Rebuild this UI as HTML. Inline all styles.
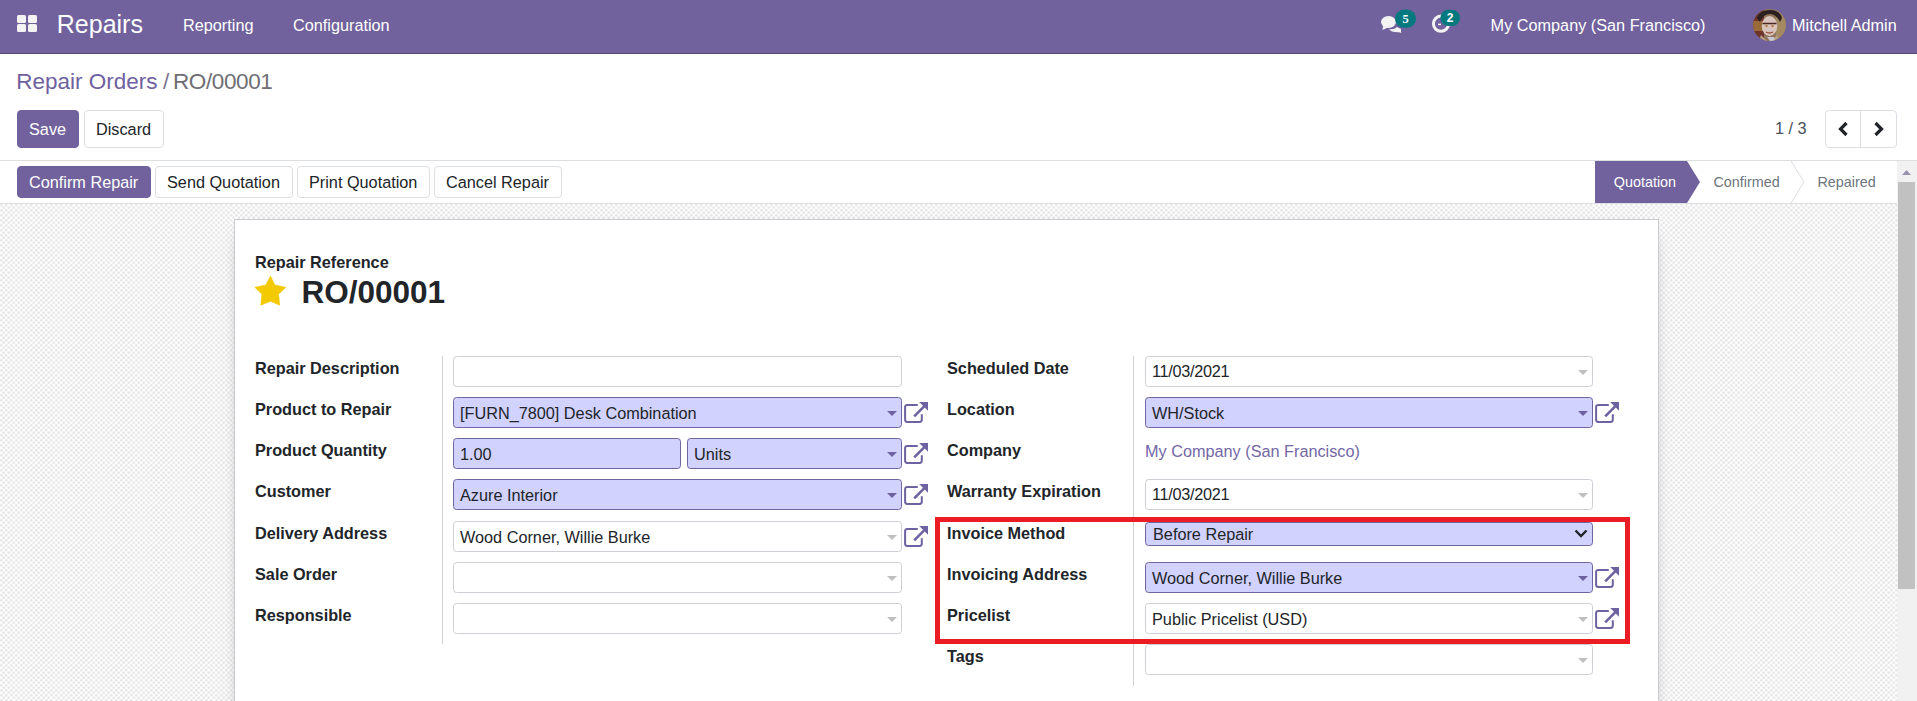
<!DOCTYPE html>
<html><head><meta charset="utf-8">
<style>
html,body{margin:0;padding:0;width:1917px;height:701px;overflow:hidden;background:#fff;font-family:"Liberation Sans",sans-serif;color:#212529}
.a{position:absolute}
.t{position:absolute;line-height:1;white-space:nowrap;font-size:16.25px}
.b{font-weight:bold}
#nav{left:0;top:0;width:1917px;height:53px;background:#71629d;border-bottom:1px solid #564a7d}
.w{color:#fff}
.btn{position:absolute;box-sizing:border-box;border-radius:4px}
.bp{background:#71629d;border:1px solid #71629d}
.bs{background:#fff;border:1px solid #dcdfe3}
#cp{left:0;top:54px;width:1917px;height:106px;background:#fff}
#sb{left:0;top:160px;width:1917px;height:42px;background:#fff;border-top:1px solid #dcdee2;border-bottom:1px solid #dcdee2}
#bg{left:0;top:204px;width:1897px;height:497px;background-color:#fcfcfc;background-image:radial-gradient(circle at 1.25px 1.25px,rgba(0,0,0,.085) 0.6px,rgba(0,0,0,0) 1.9px),radial-gradient(circle at 3.75px 3.75px,rgba(0,0,0,.085) 0.6px,rgba(0,0,0,0) 1.9px);background-size:5px 5px}
#sheet{left:234px;top:219px;width:1425px;height:520px;background:#fff;border:1px solid #c8cbd0;box-sizing:border-box;box-shadow:0 5px 20px -15px #000}
.inp{position:absolute;box-sizing:border-box;height:31px;border:1px solid #cccfd4;border-radius:3.5px;background:#fff}
.req{background:#d2d2ff;border-color:#7165a0}
.car{position:absolute;width:0;height:0;border-left:5px solid transparent;border-right:5px solid transparent;border-top:5px solid #bfbfbf}
.req .car{border-top-color:#6e62a0}
.sep{position:absolute;width:1px;background:#d0d1d8}
.lnk{position:absolute;width:25px;height:22px}
</style></head><body>

<!-- NAVBAR -->
<div id="nav" class="a">
  <div class="a" style="left:17px;top:15px;width:9px;height:8px;background:#f3f3f3;border-radius:1.5px"></div>
  <div class="a" style="left:28px;top:15px;width:9px;height:8px;background:#f3f3f3;border-radius:1.5px"></div>
  <div class="a" style="left:17px;top:24px;width:9px;height:8px;background:#f3f3f3;border-radius:1.5px"></div>
  <div class="a" style="left:28px;top:24px;width:9px;height:8px;background:#f3f3f3;border-radius:1.5px"></div>
  <div class="t w" style="left:56.8px;top:11.7px;font-size:25px">Repairs</div>
  <div class="t w" style="left:183px;top:17px">Reporting</div>
  <div class="t w" style="left:293px;top:17px">Configuration</div>

<svg class="a" style="left:1380px;top:8px" width="40" height="28" viewBox="0 0 40 28">
<ellipse cx="8.5" cy="14" rx="7.5" ry="6" fill="#f3f3f3"/>
<path d="M3 18L2.5 22L8 19.5Z" fill="#f3f3f3"/>
<path d="M9 21Q14 22 17 19L21 21L21 24.5L15 24Q11 24 9 21Z" fill="#f3f3f3"/>
<path d="M18 23L21.5 25L20 21Z" fill="#f3f3f3"/>
<rect x="15" y="1.6" width="21" height="18.2" rx="9" fill="#01797f"/>
<text x="25.5" y="15.2" font-family="Liberation Serif" font-weight="bold" font-size="12.5" fill="#fff" text-anchor="middle">5</text>
</svg>
<svg class="a" style="left:1428px;top:8px" width="36" height="28" viewBox="0 0 36 28">
<circle cx="13" cy="15.7" r="7.6" fill="none" stroke="#f3f3f3" stroke-width="3"/>
<path d="M10 16.4H13" stroke="#f3f3f3" stroke-width="1.5"/>
<rect x="12.4" y="1.8" width="19.6" height="16.2" rx="8.1" fill="#01797f"/>
<text x="22.2" y="14.2" font-family="Liberation Sans" font-weight="bold" font-size="12" fill="#fff" text-anchor="middle">2</text>
</svg>
<svg class="a" style="left:1753px;top:9px" width="33" height="32" viewBox="0 0 33 32">
<defs><clipPath id="cc"><ellipse cx="16.5" cy="16" rx="16.4" ry="16"/></clipPath></defs>
<g clip-path="url(#cc)">
<rect width="33" height="32" fill="#8f7458"/>
<rect x="0" y="0" width="11" height="32" fill="#6e3428"/>
<path d="M0 12H10V22H0Z" fill="#9a6a3a"/>
<rect x="23" y="0" width="10" height="32" fill="#a48a60"/>
<path d="M4 9Q7 1 17 1Q27 1 29 9L27 13Q23 5 17 5Q10 5 7 13Z" fill="#2b2020"/>
<ellipse cx="16.5" cy="17" rx="7.8" ry="10" fill="#d8c4bc"/>
<path d="M9.5 14.5H23.5" stroke="#4a2626" stroke-width="1.6"/>
<circle cx="13.5" cy="17" r="1.2" fill="#b07a40"/><circle cx="19.5" cy="17" r="1.2" fill="#b07a40"/>
<path d="M13 23Q16.5 25 20 23" stroke="#9a4a3a" stroke-width="1.4" fill="none"/>
<path d="M8 26L14 32H18L24 26L26 32H6Z" fill="#b8a088"/>
<path d="M14 28L17 32H22L21 28Z" fill="#c8c8d4"/>
</g></svg>
  <div class="t w" style="left:1490.6px;top:17.3px">My Company (San Francisco)</div>
  <div class="t w" style="left:1792px;top:17.3px">Mitchell Admin</div>
</div>

<!-- CONTROL PANEL -->
<div class="t" style="left:16.2px;top:71.2px;font-size:22.5px;color:#6f61a0">Repair Orders</div><div class="t" style="left:163px;top:71.2px;font-size:22.5px;color:#7a7490">/</div><div class="t" style="left:173px;top:71.2px;font-size:22.5px;letter-spacing:-0.4px;color:#6e6e74">RO/00001</div>
<div class="btn bp" style="left:17px;top:110px;width:62px;height:38px"></div>
<div class="t w" style="left:29px;top:121px">Save</div>
<div class="btn bs" style="left:84px;top:110px;width:80px;height:38px"></div>
<div class="t" style="left:96px;top:121px;color:#212529">Discard</div>
<div class="t" style="left:1775px;top:119.7px;color:#495057">1 / 3</div>
<div class="btn bs" style="left:1825px;top:110px;width:72px;height:38px"></div>
<div class="a" style="left:1860px;top:111px;width:1px;height:36px;background:#dcdfe3"></div>
<svg class="a" style="left:1836px;top:120px" width="15" height="18" viewBox="0 0 15 18"><path d="M10.5 3L4.5 9L10.5 15" fill="none" stroke="#212529" stroke-width="3.2"/></svg>
<svg class="a" style="left:1871px;top:120px" width="15" height="18" viewBox="0 0 15 18"><path d="M4.5 3L10.5 9L4.5 15" fill="none" stroke="#212529" stroke-width="3.2"/></svg>


<!-- STATUS BAR -->
<div id="sb" class="a"></div>
<div class="btn bp" style="left:17px;top:166px;width:134px;height:32px"></div>
<div class="t w" style="left:29px;top:174px">Confirm Repair</div>
<div class="btn bs" style="left:155px;top:166px;width:138px;height:32px"></div>
<div class="t" style="left:167px;top:174px">Send Quotation</div>
<div class="btn bs" style="left:297px;top:166px;width:133px;height:32px"></div>
<div class="t" style="left:309px;top:174px">Print Quotation</div>
<div class="btn bs" style="left:434px;top:166px;width:128px;height:32px"></div>
<div class="t" style="left:446px;top:174px">Cancel Repair</div>


<svg class="a" style="left:1595px;top:161px" width="300" height="42" viewBox="0 0 300 42">
<path d="M0 0H92L105 21L92 42H0Z" fill="#71629d"/>
<path d="M196 0L209 21L196 42" fill="none" stroke="#dcdde2" stroke-width="1"/>
</svg>
<div class="t w" style="left:1613.8px;top:175.3px;font-size:14.375px">Quotation</div>
<div class="t" style="left:1713.5px;top:175.1px;font-size:14.375px;color:#6c757d">Confirmed</div>
<div class="t" style="left:1817.5px;top:175.1px;font-size:14.375px;color:#6c757d">Repaired</div>

<!-- BACKGROUND + SHEET -->
<div id="bg" class="a"></div>
<div id="sheet" class="a"></div>


<!-- SHEET CONTENT -->
<div class="t b" style="left:255px;top:254.4px;color:#212529">Repair Reference</div>
<svg class="a" style="left:250px;top:272px" width="40" height="38" viewBox="0 0 40 38"><path d="M20.5 4.1L24.9 13L35.8 15.3L28.5 22.2L29.8 33.2L20.5 29.3L10.8 33.2L11.9 22.2L4.9 15.3L15.7 13Z" fill="#f3c900" stroke="#f3c900" stroke-width="0.6" stroke-linejoin="round"/></svg>
<div class="t b" style="left:301.5px;top:276.6px;font-size:31.5px;color:#212529">RO/00001</div>

<div class="sep" style="left:442px;top:356px;height:288px"></div>
<div class="sep" style="left:1133px;top:356px;height:330px"></div>

<div class="t b" style="left:255px;top:359.9px">Repair Description</div>
<div class="t b" style="left:255px;top:401.1px">Product to Repair</div>
<div class="t b" style="left:255px;top:442.2px">Product Quantity</div>
<div class="t b" style="left:255px;top:483.4px">Customer</div>
<div class="t b" style="left:255px;top:524.6px">Delivery Address</div>
<div class="t b" style="left:255px;top:565.8px">Sale Order</div>
<div class="t b" style="left:255px;top:606.9px">Responsible</div>

<div class="inp" style="left:453px;top:356px;width:449px"></div>
<div class="inp req" style="left:453px;top:397px;width:449px"><div class="t" style="left:6px;top:7px">[FURN_7800] Desk Combination</div><div class="car" style="left:433px;top:13px"></div></div>
<div class="inp req" style="left:453px;top:438px;width:228px"><div class="t" style="left:6px;top:7px">1.00</div></div>
<div class="inp req" style="left:687px;top:438px;width:215px"><div class="t" style="left:6px;top:7px">Units</div><div class="car" style="left:199px;top:13px"></div></div>
<div class="inp req" style="left:453px;top:479px;width:449px"><div class="t" style="left:6px;top:7px">Azure Interior</div><div class="car" style="left:433px;top:13px"></div></div>
<div class="inp" style="left:453px;top:521px;width:449px"><div class="t" style="left:6px;top:7px">Wood Corner, Willie Burke</div><div class="car" style="left:433px;top:13px"></div></div>
<div class="inp" style="left:453px;top:562px;width:449px"><div class="car" style="left:433px;top:13px"></div></div>
<div class="inp" style="left:453px;top:603px;width:449px"><div class="car" style="left:433px;top:13px"></div></div>

<div class="t b" style="left:947px;top:359.9px">Scheduled Date</div>
<div class="t b" style="left:947px;top:401.1px">Location</div>
<div class="t b" style="left:947px;top:442.2px">Company</div>
<div class="t b" style="left:947px;top:483.4px">Warranty Expiration</div>
<div class="t b" style="left:947px;top:524.6px">Invoice Method</div>
<div class="t b" style="left:947px;top:565.8px">Invoicing Address</div>
<div class="t b" style="left:947px;top:606.9px">Pricelist</div>
<div class="t b" style="left:947px;top:648px">Tags</div>

<div class="inp" style="left:1145px;top:356px;width:448px"><div class="t" style="left:6px;top:6px;letter-spacing:-0.3px">11/03/2021</div><div class="car" style="left:432px;top:13px"></div></div>
<div class="inp req" style="left:1145px;top:397px;width:448px"><div class="t" style="left:6px;top:7px">WH/Stock</div><div class="car" style="left:432px;top:13px"></div></div>
<div class="t" style="left:1145px;top:442.9px;color:#7367a6">My Company (San Francisco)</div>
<div class="inp" style="left:1145px;top:479px;width:448px"><div class="t" style="left:6px;top:6px;letter-spacing:-0.3px">11/03/2021</div><div class="car" style="left:432px;top:13px"></div></div>
<div class="inp req" style="left:1145px;top:522px;width:448px;height:24px"><div class="t" style="left:7px;top:2.5px">Before Repair</div></div>
<div class="inp req" style="left:1145px;top:562px;width:448px"><div class="t" style="left:6px;top:7px">Wood Corner, Willie Burke</div><div class="car" style="left:432px;top:13px"></div></div>
<div class="inp" style="left:1145px;top:603px;width:448px"><div class="t" style="left:6px;top:7px">Public Pricelist (USD)</div><div class="car" style="left:432px;top:13px"></div></div>
<div class="inp" style="left:1145px;top:644px;width:448px"><div class="car" style="left:432px;top:13px"></div></div>

<svg class="a" style="left:904px;top:401px" width="25" height="23" viewBox="0 0 25 23"><path d="M13.8 3.9H3.2a2.1 2.1 0 0 0-2.1 2.1V18.8a2.1 2.1 0 0 0 2.1 2.1H15.7a2.1 2.1 0 0 0 2.1-2.1V13.2" fill="none" stroke="#6e62a0" stroke-width="2"/><path d="M15.2 1H24V9.8Z" fill="#6e62a0"/><path d="M10.2 15.4L20.4 5.2" stroke="#6e62a0" stroke-width="2.6"/></svg>
<svg class="a" style="left:904px;top:442px" width="25" height="23" viewBox="0 0 25 23"><path d="M13.8 3.9H3.2a2.1 2.1 0 0 0-2.1 2.1V18.8a2.1 2.1 0 0 0 2.1 2.1H15.7a2.1 2.1 0 0 0 2.1-2.1V13.2" fill="none" stroke="#6e62a0" stroke-width="2"/><path d="M15.2 1H24V9.8Z" fill="#6e62a0"/><path d="M10.2 15.4L20.4 5.2" stroke="#6e62a0" stroke-width="2.6"/></svg>
<svg class="a" style="left:904px;top:483px" width="25" height="23" viewBox="0 0 25 23"><path d="M13.8 3.9H3.2a2.1 2.1 0 0 0-2.1 2.1V18.8a2.1 2.1 0 0 0 2.1 2.1H15.7a2.1 2.1 0 0 0 2.1-2.1V13.2" fill="none" stroke="#6e62a0" stroke-width="2"/><path d="M15.2 1H24V9.8Z" fill="#6e62a0"/><path d="M10.2 15.4L20.4 5.2" stroke="#6e62a0" stroke-width="2.6"/></svg>
<svg class="a" style="left:904px;top:525px" width="25" height="23" viewBox="0 0 25 23"><path d="M13.8 3.9H3.2a2.1 2.1 0 0 0-2.1 2.1V18.8a2.1 2.1 0 0 0 2.1 2.1H15.7a2.1 2.1 0 0 0 2.1-2.1V13.2" fill="none" stroke="#6e62a0" stroke-width="2"/><path d="M15.2 1H24V9.8Z" fill="#6e62a0"/><path d="M10.2 15.4L20.4 5.2" stroke="#6e62a0" stroke-width="2.6"/></svg>
<svg class="a" style="left:1595px;top:401px" width="25" height="23" viewBox="0 0 25 23"><path d="M13.8 3.9H3.2a2.1 2.1 0 0 0-2.1 2.1V18.8a2.1 2.1 0 0 0 2.1 2.1H15.7a2.1 2.1 0 0 0 2.1-2.1V13.2" fill="none" stroke="#6e62a0" stroke-width="2"/><path d="M15.2 1H24V9.8Z" fill="#6e62a0"/><path d="M10.2 15.4L20.4 5.2" stroke="#6e62a0" stroke-width="2.6"/></svg>
<svg class="a" style="left:1595px;top:566px" width="25" height="23" viewBox="0 0 25 23"><path d="M13.8 3.9H3.2a2.1 2.1 0 0 0-2.1 2.1V18.8a2.1 2.1 0 0 0 2.1 2.1H15.7a2.1 2.1 0 0 0 2.1-2.1V13.2" fill="none" stroke="#6e62a0" stroke-width="2"/><path d="M15.2 1H24V9.8Z" fill="#6e62a0"/><path d="M10.2 15.4L20.4 5.2" stroke="#6e62a0" stroke-width="2.6"/></svg>
<svg class="a" style="left:1595px;top:607px" width="25" height="23" viewBox="0 0 25 23"><path d="M13.8 3.9H3.2a2.1 2.1 0 0 0-2.1 2.1V18.8a2.1 2.1 0 0 0 2.1 2.1H15.7a2.1 2.1 0 0 0 2.1-2.1V13.2" fill="none" stroke="#6e62a0" stroke-width="2"/><path d="M15.2 1H24V9.8Z" fill="#6e62a0"/><path d="M10.2 15.4L20.4 5.2" stroke="#6e62a0" stroke-width="2.6"/></svg>
<svg class="a" style="left:1574px;top:528px" width="14" height="11" viewBox="0 0 14 11"><path d="M1.5 2.5L7 8L12.5 2.5" fill="none" stroke="#212529" stroke-width="2.4"/></svg>

<!-- RED HIGHLIGHT -->
<div class="a" style="left:935px;top:517px;width:695px;height:127px;box-sizing:border-box;border:5px solid #ec1c24"></div>

<!-- SCROLLBAR -->
<div class="a" style="left:1897px;top:161px;width:20px;height:540px;background:#f1f1f1"></div>
<div class="a" style="left:1898px;top:182px;width:17px;height:407px;background:#c1c1c1"></div>
<svg class="a" style="left:1902px;top:170px" width="9" height="5" viewBox="0 0 9 5"><path d="M4.5 0L9 5H0Z" fill="#9a90b0"/></svg>


</body></html>
